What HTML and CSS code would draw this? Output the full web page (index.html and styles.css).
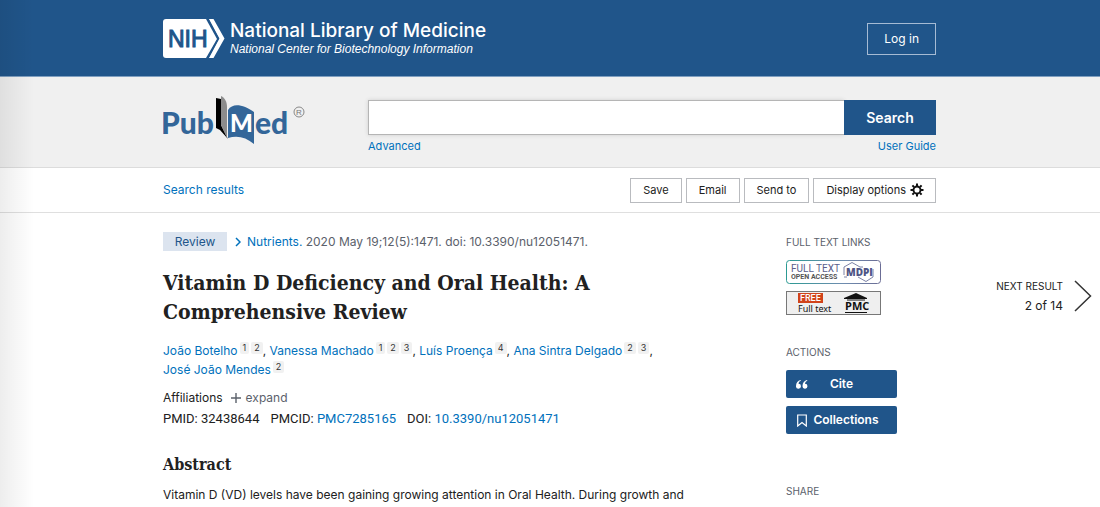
FILE: index.html
```html
<!DOCTYPE html>
<html lang="en">
<head>
<meta charset="utf-8">
<meta name="viewport" content="width=device-width, initial-scale=1">
<title>Vitamin D Deficiency and Oral Health: A Comprehensive Review - PubMed</title>
<link rel="stylesheet" href="styles.css">
</head>
<body>
<header class="ncbi-header">
  <div class="container ncbi-bar">
    <a class="nih-brand" href="#">
      <svg class="nih-mark" viewBox="0 0 62 40" width="62" height="40" role="img" aria-label="NIH">
        <path d="M3 0H43L54 20L43 39H3Q0 39 0 36V3Q0 0 3 0Z" fill="#fff"/>
        <path d="M45.500 0H50.500L61.500 19.500L50.500 39H45.500L56 19.500Z" fill="#fff"/>
        <path d="M44.500 -1L55.500 19.500L44.500 40" fill="none" stroke="#20558a" stroke-width="1.600"/>
        <text class="nih-letters" x="5" y="28">NIH</text>
      </svg>
      <span class="brand-text">
        <span class="brand-title">National Library of Medicine</span>
        <span class="brand-sub">National Center for Biotechnology Information</span>
      </span>
    </a>
    <a class="login" href="#">Log in</a>
  </div>
</header>

<section class="search-band">
  <div class="container search-row">
    <a class="pubmed" href="#" aria-label="PubMed">
      <svg viewBox="0 0 144 50" width="144" height="50">
        <text class="logo-word" x="-2" y="38">Pub</text>
        <path d="M53 2L58 3V29L65 43L57 34L53 32Z" fill="#000"/>
        <path d="M58 0C62 2 64 6 64 11V42L58 29Z" fill="#8c8c8c"/>
        <path d="M65 14C70 6 81 9 91 16V48C83 41 74 39 65 42Z" fill="#336699"/>
        <text class="logo-m" x="67" y="36">M</text>
        <text class="logo-word" x="92" y="38">ed</text>
        <circle cx="136" cy="16" r="5" fill="none" stroke="#888" stroke-width="1"/>
        <text class="logo-reg" x="133" y="19">R</text>
      </svg>
    </a>
    <form class="search-form">
      <div class="search-line">
        <input class="search-input" type="text" aria-label="Search PubMed">
        <button class="search-button" type="button">Search</button>
      </div>
      <div class="search-links"><a href="#">Advanced</a><a href="#">User Guide</a></div>
    </form>
  </div>
</section>

<nav class="toolbar">
  <div class="container toolbar-row">
    <a class="results-link" href="#">Search results</a>
    <div class="tools">
      <button class="tool" type="button">Save</button>
      <button class="tool" type="button">Email</button>
      <button class="tool" type="button">Send to</button>
      <button class="tool tool-display" type="button">Display options
        <svg viewBox="-7 -7 14 14" width="14" height="14" aria-hidden="true">
          <circle r="3.500" fill="none" stroke="#111" stroke-width="1.900"/>
          <path d="M0-4V-6.500M0 4V6.500M-4 0H-6.500M4 0H6.500M-3-3L-4.600-4.600M3 3L4.600 4.600M3-3L4.600-4.600M-3 3L-4.600 4.600" stroke="#111" stroke-width="2"/>
        </svg>
      </button>
    </div>
  </div>
</nav>

<div class="page">
  <main class="content">
    <article class="article">
      <div class="citation">
        <span class="badge">Review</span>
        <svg class="chevron" viewBox="0 0 6 10" width="6" height="10" aria-hidden="true"><path d="M1 1L5 5L1 9" fill="none" stroke="#0071bc" stroke-width="1.500"/></svg>
        <span><a href="#">Nutrients.</a> 2020 May 19;12(5):1471. doi: 10.3390/nu12051471.</span>
      </div>
      <h1 class="title">Vitamin D Deficiency and Oral Health: A Comprehensive Review</h1>
      <div class="authors"><span class="author"><a href="#">João Botelho</a><sup>1</sup><sup>2</sup>,</span> <span class="author"><a href="#">Vanessa Machado</a><sup>1</sup><sup>2</sup><sup>3</sup>,</span> <span class="author"><a href="#">Luís Proença</a><sup>4</sup>,</span> <span class="author"><a href="#">Ana Sintra Delgado</a><sup>2</sup><sup>3</sup>,</span> <span class="author"><a href="#">José João Mendes</a><sup>2</sup></span></div>
      <div class="affiliations">Affiliations
        <button class="expand" type="button"><svg viewBox="0 0 10 10" width="10" height="10" aria-hidden="true"><path d="M5 0V10M0 5H10" stroke="#5b616b" stroke-width="1.400"/></svg>expand</button>
      </div>
      <div class="ids"><span>PMID: 32438644</span><span>PMCID: <a href="#">PMC7285165</a></span><span>DOI: <a href="#">10.3390/nu12051471</a></span></div>
      <h2 class="abstract-title">Abstract</h2>
      <p class="abstract">Vitamin D (VD) levels have been gaining growing attention in Oral Health. During growth and</p>
    </article>
    <aside class="side">
      <h3 class="side-title">FULL TEXT LINKS</h3>
      <a class="fulltext" href="#">
        <svg viewBox="0 0 95 24" width="95" height="24" role="img" aria-label="Full text open access, MDPI">
          <defs><linearGradient id="edge"><stop offset="0" stop-color="#2c9a93"/><stop offset=".6" stop-color="#6f8db0"/><stop offset="1" stop-color="#6b6d95"/></linearGradient></defs>
          <rect x=".5" y=".5" width="94" height="23" rx="3" fill="#fff" stroke="url(#edge)"/>
          <text class="mdpi-top" x="5" y="12">FULL TEXT</text>
          <text class="mdpi-low" x="5" y="19">OPEN ACCESS</text>
          <path d="M58 15V7L66 2.500L74 7H77M72 17L80 21.500L87 17V9M58 17H61" fill="none" stroke="#7c82a6" stroke-width="1"/>
          <text class="mdpi-name" x="60" y="16">MDPI</text>
        </svg>
      </a>
      <a class="fulltext" href="#">
        <svg viewBox="0 0 95 24" width="95" height="24" role="img" aria-label="Free full text, PMC">
          <rect x=".5" y=".5" width="94" height="23" fill="#efefef" stroke="#777"/>
          <rect x="12" y="2" width="25" height="10" fill="#d1431a"/>
          <text class="pmc-free" x="14" y="10">FREE</text>
          <text class="pmc-full" x="12" y="21">Full text</text>
          <path d="M58 7L70 2L81 7V8H58Z" fill="#111"/>
          <path d="M61 9H79M59 21.500H81" stroke="#111" stroke-width="1"/>
          <text class="pmc-name" x="59" y="19">PMC</text>
        </svg>
      </a>
      <h3 class="side-title actions-title">ACTIONS</h3>
      <button class="action action-cite" type="button">
        <svg viewBox="0 0 12 9" width="12" height="9" aria-hidden="true"><path d="M4.500 0C2 .5 0 2.500 0 6A2.500 2.500 0 1 0 2.500 3.700C2.700 2.300 3.500 1.300 4.900.8ZM11 0C8.500.5 6.500 2.500 6.500 6A2.500 2.500 0 1 0 9 3.700C9.200 2.300 10 1.300 11.400.8Z" fill="#fff"/></svg>
        <span class="action-label">Cite</span>
      </button>
      <button class="action" type="button">
        <svg viewBox="0 0 12 13" width="12" height="13" aria-hidden="true"><path d="M1.700 1H10.300V12L6 8.500L1.700 12Z" fill="none" stroke="#fff" stroke-width="1.200"/></svg>
        <span class="action-label">Collections</span>
      </button>
      <h3 class="side-title share-title">SHARE</h3>
    </aside>
  </main>
  <a class="next" href="#">
    <span class="next-text"><span class="next-label">NEXT RESULT</span><span>2 of 14</span></span>
    <svg viewBox="0 0 18 32" width="18" height="32" aria-hidden="true"><path d="M1 1L16.500 16L1 31" fill="none" stroke="#333" stroke-width="1.500"/></svg>
  </a>
</div>
<div class="edge-shade"></div>
</body>
</html>
```
FILE: styles.css
```css
* { box-sizing: border-box; }
body {
  margin: 0;
  position: relative;
  height: 100vh;
  overflow: hidden;
  background: #fff;
  color: #212121;
  font: 12px/16px Inter, Roboto, sans-serif;
}
a { color: #0071bc; text-decoration: none; }
button { font: inherit; color: inherit; margin: 0; cursor: pointer; }
svg { display: block; flex: none; }
.container { max-width: 774px; margin: 0 auto; padding-right: 1px; display: flex; justify-content: space-between; }

.ncbi-header { background: #20558a; border-bottom: 1px solid #7f9fc0; }
.ncbi-bar { height: 76px; align-items: center; padding-top: 2px; }
.nih-brand { display: flex; gap: 5px; align-items: center; color: #fff; }
.nih-letters { font: 23px "Liberation Sans", sans-serif; fill: #20558a; stroke: #20558a; stroke-width: 1px; }
.brand-text { display: flex; flex-direction: column; }
.brand-title { font: 500 19px/20px Inter, sans-serif; }
.brand-sub { font: italic 12px/16px "Liberation Sans", sans-serif; }
.login { border: 1px solid #a6bbd4; color: #fff; padding: 7px 16px; }

.search-band { background: #f0f0f0; border-bottom: 1px solid #dcdcdc; }
.search-row { height: 90px; align-items: flex-start; padding-top: 19px; }
.logo-word { font: 900 30px Lato, sans-serif; fill: #336699; }
.logo-m { font: 900 24px Lato, sans-serif; fill: #fff; }
.logo-reg { font: 8px "Liberation Sans", sans-serif; fill: #777; }
.search-form { width: 568px; padding-top: 4px; }
.search-line { display: flex; }
.search-input { flex: 1; min-width: 0; height: 35px; border: 1px solid #b5b5b5; border-right: 0; background: #fff; padding: 0 10px; box-shadow: 0 0 4px #cfcfcf; }
.search-button { width: 92px; height: 35px; border: 0; background: #20558a; color: #fff; font-size: 14px; font-weight: 600; position: relative; }
.search-links { display: flex; justify-content: space-between; font-size: 11px; padding-top: 3px; }

.toolbar { border-bottom: 1px solid #dfdfdf; }
.toolbar-row { height: 44px; align-items: center; }
.tools { display: flex; gap: 4px; }
.tool { height: 25px; padding: 0 12px; border: 1px solid #b9bbbf; background: #fff; font-size: 11px; }
.tool-display { display: flex; align-items: center; gap: 4px; padding-right: 11px; }

.page { display: grid; grid-template-columns: 1fr minmax(0, 774px) 1fr; }
.content { grid-column: 2; display: grid; grid-template-columns: minmax(0, 1fr) 151px; column-gap: 98px; padding-top: 19px; }
.citation { display: flex; align-items: center; gap: 6px; color: #5b616b; height: 19px; }
.badge { background: #dce4ef; color: #20558a; width: 64px; line-height: 19px; text-align: center; }
.chevron { margin-left: 2px; }
.title { margin: 17px 0 0; font: bold 21px/29px "DejaVu Serif Condensed", "DejaVu Serif", serif; }
.authors { margin-top: 15px; line-height: 19px; }
.author { white-space: nowrap; }
sup { font-size: 9px; line-height: 12px; background: #f1f1f1; color: #333; padding: 0 3px; margin-left: 2px; vertical-align: 4px; border-radius: 2px; display: inline-block; }
.affiliations { display: flex; gap: 8px; margin-top: 11px; line-height: 16px; }
.expand { display: flex; align-items: center; gap: 5px; padding: 0; border: 0; background: none; color: #5b616b; }
.ids { display: flex; gap: 11px; margin-top: 5px; font: 13px/16px Roboto, sans-serif; }
.abstract-title { margin: 26px 0 0; font: bold 16px/24px "DejaVu Serif Condensed", "DejaVu Serif", serif; }
.abstract { margin: 9px 0 0; line-height: 18px; white-space: nowrap; }

.side-title { margin: 2px 0 10px; font-size: 10px; line-height: 16px; font-weight: 400; color: #5b616b; }
.fulltext { display: block; width: 95px; margin-bottom: 7px; }
.mdpi-top { font: 10px Roboto, sans-serif; fill: #5b5e8b; }
.mdpi-low { font: bold 7px Roboto, sans-serif; fill: #555; }
.mdpi-name { font: 800 10px "Open Sans", sans-serif; fill: #4f5585; }
.pmc-free { font: 500 9px Roboto, sans-serif; fill: #fff; }
.pmc-full { font: 9px "Noto Sans", sans-serif; fill: #111; }
.pmc-name { font: bold 11px "Open Sans", sans-serif; fill: #111; }
.actions-title { margin: 29px 0 10px; }
.action { display: flex; align-items: center; width: 111px; height: 28px; padding: 0 13px 0 10px; border: 0; border-radius: 2px; margin-bottom: 8px; background: #20558a; color: #fff; font-weight: 600; }
.action-cite { padding-right: 22px; }
.action-label { flex: 1; text-align: center; }
.share-title { margin-top: 49px; }
.next { grid-column: 3; justify-self: end; align-self: start; display: flex; align-items: center; gap: 11px; padding: 64px 8px 0 0; color: #212121; }
.next-text { display: flex; flex-direction: column; align-items: flex-end; line-height: 19px; }
.next-label { font-size: 10px; }
.edge-shade { position: absolute; inset: 0 auto 0 0; width: 34px; background: linear-gradient(90deg, rgba(0, 0, 0, .07), rgba(0, 0, 0, 0)); pointer-events: none; }
```
